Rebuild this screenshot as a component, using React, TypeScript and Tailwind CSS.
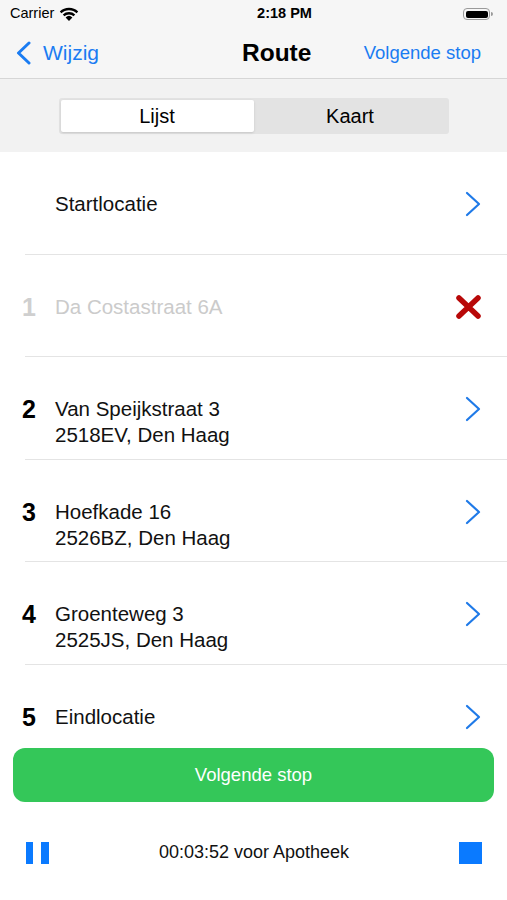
const font = { fontFamily: '"Liberation Sans", Arial, sans-serif' };

function Chevron() {
  return (
    <svg width="18" height="26" viewBox="0 0 18 26" fill="none">
      <path d="M3 2 L15 13 L3 24" stroke="#1f7ae8" strokeWidth="2.2" strokeLinecap="round" strokeLinejoin="round" />
    </svg>
  );
}

function RedCross() {
  return (
    <svg width="27" height="26" viewBox="0 0 27 26" fill="none">
      <path d="M4 4 L23 22 M23 4 L4 22" stroke="#b80808" strokeWidth="5.5" strokeLinecap="round" />
    </svg>
  );
}

type Stop = { num?: string; lines: string[]; done?: boolean };

const stops: Stop[] = [
  { lines: ["Startlocatie"] },
  { num: "1", lines: ["Da Costastraat 6A"], done: true },
  { num: "2", lines: ["Van Speijkstraat 3", "2518EV, Den Haag"] },
  { num: "3", lines: ["Hoefkade 16", "2526BZ, Den Haag"] },
  { num: "4", lines: ["Groenteweg 3", "2525JS, Den Haag"] },
  { num: "5", lines: ["Eindlocatie"] },
];

export default function App() {
  return (
    <div className="w-[507px] h-[900px] bg-white flex flex-col overflow-hidden" style={font}>
      {/* Status bar */}
      <div className="h-[28px] flex-none bg-[#f6f6f6] flex items-center px-[10px] text-[14.5px] text-black">
        <div className="flex items-center gap-[4px] w-[200px]">
          <span>Carrier</span>
          <svg width="22" height="16" viewBox="0 0 22 16">
            <path d="M11 15 L7.6 11.4 A5 5 0 0 1 14.4 11.4 Z" fill="#000" />
            <path d="M4.8 8.6 A9 9 0 0 1 17.2 8.6 L15.6 10.3 A6.6 6.6 0 0 0 6.4 10.3 Z" fill="#000" />
            <path d="M1.8 5.6 A13.2 13.2 0 0 1 20.2 5.6 L18.6 7.3 A10.8 10.8 0 0 0 3.4 7.3 Z" fill="#000" />
          </svg>
        </div>
        <div className="flex-1 text-center font-bold -ml-[104px]">2:18 PM</div>
        <div className="flex items-center pr-[4px]">
          <div className="w-[27px] h-[12px] rounded-[4px] border border-[#9a9a9a] p-[1.5px]">
            <div className="w-full h-full rounded-[2px] bg-black" />
          </div>
          <div className="w-[2px] h-[4px] rounded-r-sm bg-[#9a9a9a] ml-[1px]" />
        </div>
      </div>

      {/* Nav bar */}
      <div className="h-[51px] flex-none bg-[#f6f6f6] border-b border-[#d6d6d6] flex items-center pl-[15px] pr-[26px]">
        <div className="w-[227px] flex items-center gap-[11px] text-[#1a7cf2] text-[21px]">
          <svg width="17" height="24" viewBox="0 0 17 24" fill="none">
            <path d="M14 2 L3.5 12 L14 22" stroke="#1a7cf2" strokeWidth="3" strokeLinecap="round" strokeLinejoin="round" />
          </svg>
          <span>Wijzig</span>
        </div>
        <div className="text-[24.5px] font-bold text-black">Route</div>
        <div className="ml-auto text-[18.5px] text-[#1a7cf2]">Volgende stop</div>
      </div>

      {/* Segmented control */}
      <div className="h-[73px] flex-none bg-[#f2f2f2] flex items-center justify-center">
        <div className="w-[390px] h-[36px] bg-[#e3e3e3] rounded-[3px] p-[2px] flex">
          <div className="flex-1 bg-white rounded-[2px] shadow-sm flex items-center justify-center text-[20px] text-black">
            Lijst
          </div>
          <div className="flex-1 flex items-center justify-center text-[20px] text-black">Kaart</div>
        </div>
      </div>

      {/* List */}
      <div className="h-[590px] flex-none overflow-hidden">
        {stops.map((s, i) => (
          <div key={i} className="h-[102.6px] ml-[25px] border-b border-[#e4e4e4] flex items-start pt-[39px] pr-[25px]">
            <div
              className={`-ml-[3px] w-[33px] h-[26px] leading-[26px] text-[25px] font-semibold ${s.done ? "text-[#cfcfcf]" : "text-black"}`}
            >
              {s.num}
            </div>
            <div className={`flex-1 text-[20.5px] leading-[26px] ${s.done ? "text-[#cbcbcb]" : "text-[#111]"}`}>
              {s.lines.map((l) => (
                <div key={l}>{l}</div>
              ))}
            </div>
            <div className="h-[26px] flex items-center">{s.done ? <RedCross /> : <Chevron />}</div>
          </div>
        ))}
      </div>

      {/* Action button */}
      <div className="px-[13px] mt-[6px] flex-none">
        <div className="h-[54px] rounded-[12px] bg-[#34c759] flex items-center justify-center text-white text-[18.5px]">
          Volgende stop
        </div>
      </div>

      {/* Bottom bar */}
      <div className="flex items-center px-[26px] pt-[37px] flex-none">
        <div className="flex gap-[8px] w-[60px]">
          <div className="w-[7px] h-[22px] bg-[#0a7aff]" />
          <div className="w-[8px] h-[22px] bg-[#0a7aff]" />
        </div>
        <div className="flex-1 text-center text-[18px] text-[#111]">00:03:52 voor Apotheek</div>
        <div className="w-[60px] flex justify-end -mr-[1px]">
          <div className="w-[23px] h-[22px] bg-[#0a7aff]" />
        </div>
      </div>
    </div>
  );
}
